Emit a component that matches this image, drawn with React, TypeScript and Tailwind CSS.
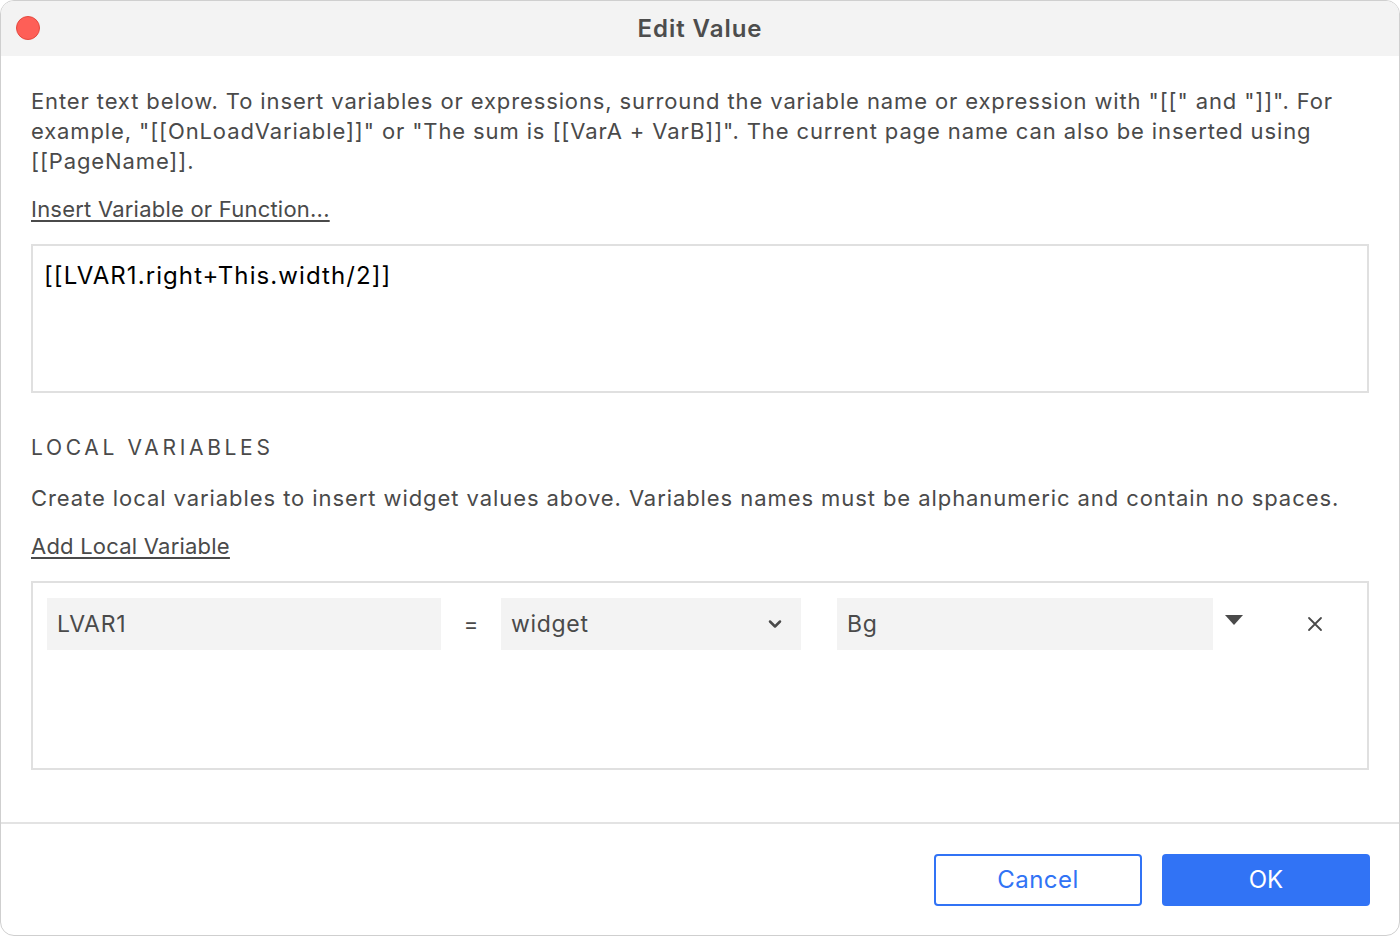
import { ChevronDown } from "lucide-react";

const font = { fontFamily: "Inter, 'Noto Sans', sans-serif" };

export default function App() {
  return (
    <div className="w-[1400px] h-[936px] bg-white" style={font}>
      <div className="w-full h-full rounded-[14px] border border-[#cfcfcf] overflow-hidden flex flex-col bg-white text-[#4a4a4a]">
        {/* title bar */}
        <div className="h-[55px] bg-[#f3f3f3] flex items-center relative shrink-0">
          <div className="absolute left-[15px] top-[15px] w-[24px] h-[24px] rounded-full bg-[#fe5f57] border border-[#e5493f]" />
          <div className="flex-1 text-center text-[24px] font-semibold tracking-[0.04em] text-[#4d4d4d]">Edit Value</div>
        </div>

        {/* body */}
        <div className="flex-1 px-[30px] pt-[30px] flex flex-col">
          <p className="text-[22px] leading-[30px] tracking-[0.04em]">
            Enter text below. To insert variables or expressions, surround the variable name or expression with "[[" and "]]". For example, "[[OnLoadVariable]]" or "The sum is [[VarA + VarB]]". The current page name can also be inserted using [[PageName]].
          </p>
          <a className="mt-[18px] text-[22px] leading-[30px] tracking-[0.01em] underline underline-offset-[3px] w-fit cursor-pointer">Insert Variable or Function...</a>

          <div className="mt-[20px] h-[149px] border-2 border-[#e0e0e0] px-[11px] pt-[14px]">
            <div className="text-[24px] leading-[32px] tracking-[0.045em] text-black">[[LVAR1.right+This.width/2]]</div>
          </div>

          <div className="mt-[40px] text-[21px] leading-[30px] tracking-[0.175em]">LOCAL VARIABLES</div>
          <p className="mt-[20px] text-[22px] leading-[30px] tracking-[0.042em]">
            Create local variables to insert widget values above. Variables names must be alphanumeric and contain no spaces.
          </p>
          <a className="mt-[18px] text-[22px] leading-[30px] tracking-[0.01em] underline underline-offset-[3px] w-fit cursor-pointer">Add Local Variable</a>

          <div className="mt-[20px] h-[189px] border-2 border-[#e0e0e0] px-[14px] pt-[15px]">
            <div className="flex items-center">
              <div className="w-[394px] shrink-0 h-[52px] bg-[#f3f3f3] flex items-center px-[10px] text-[23px] tracking-[0.03em]">LVAR1</div>
              <div className="w-[60px] shrink-0 text-center text-[22px]">=</div>
              <div className="w-[300px] shrink-0 h-[52px] bg-[#f3f3f3] flex items-center justify-between pl-[10px] pr-[16px] text-[23px] tracking-[0.03em]">
                <span>widget</span>
                <ChevronDown className="w-[20px] h-[20px] text-[#4a4a4a]" strokeWidth={3} />
              </div>
              <div className="w-[36px] shrink-0" />
              <div className="w-[376px] shrink-0 h-[52px] bg-[#f3f3f3] flex items-center px-[10px] text-[23px] tracking-[0.03em]">Bg</div>
              <div className="w-[42px] shrink-0 flex justify-center self-start pt-[17px]">
                <svg width="18" height="11" viewBox="0 0 18 11">
                  <path d="M0 0 L18 0 L9 10 Z" fill="#4a4a4a" />
                </svg>
              </div>
              <div className="ml-[48px] w-[24px] shrink-0 flex justify-center">
                <svg width="16" height="16" viewBox="0 0 16 16">
                  <path d="M2 2 L14 14 M14 2 L2 14" stroke="#4a4a4a" strokeWidth="1.8" strokeLinecap="round" />
                </svg>
              </div>
            </div>
          </div>
        </div>

        {/* footer */}
        <div className="h-[113px] border-t-2 border-[#e3e3e3] flex items-start justify-end gap-[20px] px-[29px] pt-[30px] shrink-0">
          <button className="w-[208px] h-[52px] rounded-[4px] border-2 border-[#3173f5] bg-white text-[#3173f5] text-[24px] tracking-[0.02em]">Cancel</button>
          <button className="w-[208px] h-[52px] rounded-[4px] bg-[#3173f5] text-white text-[24px]">OK</button>
        </div>
      </div>
    </div>
  );
}
